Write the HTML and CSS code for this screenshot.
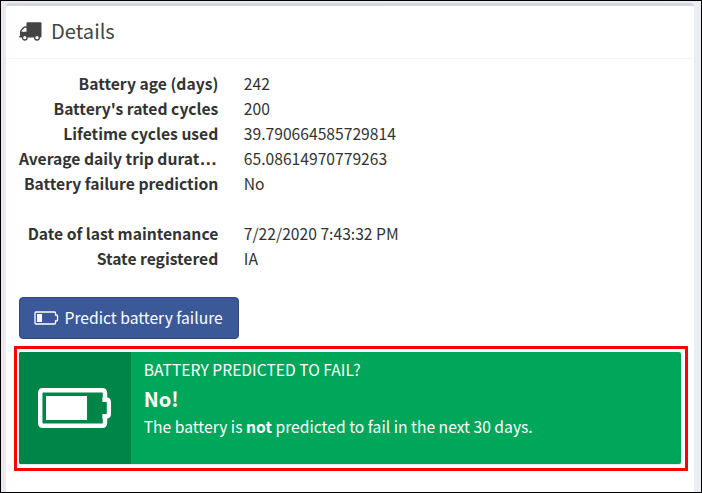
FILE: index.html
```html
<!DOCTYPE html>
<html lang="en">
<head>
<meta charset="utf-8">
<title>Details</title>
<link rel="stylesheet" href="styles.css">
</head>
<body>
<main class="page">
  <section class="box">
    <header class="box-header">
      <svg class="truck" width="23" height="20" viewBox="0 0 23 20">
        <path fill="#444" fill-rule="evenodd" d="M8.500 1.300H21.500q1 0 1 1V15.500q0 1-1 1H1q-1 0-1-.7t1-.7V10.500q0-.9.700-1.600L4.300 6Q5 5.300 6 5.300h1.500V2.300q0-1 1-1zM5.600 6.800 2.500 10v.7h5V6.800z"/>
        <circle cx="5.800" cy="16.700" r="2.300" fill="#fff" stroke="#444" stroke-width="1.300"/>
        <circle cx="18" cy="16.700" r="2.300" fill="#fff" stroke="#444" stroke-width="1.300"/>
      </svg>
      <h3 class="box-title">Details</h3>
    </header>
    <div class="box-body">
      <dl class="details">
        <dt>Battery age (days)</dt><dd>242</dd>
        <dt>Battery's rated cycles</dt><dd>200</dd>
        <dt>Lifetime cycles used</dt><dd>39.790664585729814</dd>
        <dt>Average daily trip durat<span class="ellipsis">…</span></dt><dd>65.08614970779263</dd>
        <dt>Battery failure prediction</dt><dd>No</dd>
        <dt class="second">Date of last maintenance</dt><dd class="second">7/22/2020 7:43:32 PM</dd>
        <dt>State registered</dt><dd>IA</dd>
      </dl>
      <button class="predict" type="button">
        <svg width="25" height="14" viewBox="0 0 25 14">
          <path fill="none" stroke="#fff" stroke-width="1.300" d="M2 1h18.500q1 0 1 1v2h1q1 0 1 1v4q0 1-1 1h-1v2q0 1-1 1H2q-1 0-1-1V2q0-1 1-1z"/>
          <path fill="#fff" d="M3 3h5v8H3z"/>
        </svg>
        <span>Predict battery failure</span>
      </button>
      <div class="highlight">
        <div class="info-box">
          <div class="info-icon">
            <svg width="74" height="42" viewBox="0 0 74 42">
              <path fill="none" stroke="#fff" stroke-width="4.500" d="M5 3.200h59q3 0 3 3v6.300h1q2.800 0 2.800 3v11q0 3-2.800 3h-1v6.300q0 3-3 3H5q-2.800 0-2.800-3V6.200q0-3 2.800-3z"/>
              <path fill="#fff" d="M64.500 10.500H69V15h-4.500zM64.500 27H69v4.500h-4.500z"/>
              <path fill="#008548" d="M64.500 15H68.500v12h-4z"/>
              <path fill="#fff" d="M8 9h41v24H8z"/>
            </svg>
          </div>
          <div class="info-content">
            <div class="info-text">BATTERY PREDICTED TO FAIL?</div>
            <div class="info-number">No!</div>
            <div class="info-note">The battery is <b>not</b> predicted to fail in the next 30 days.</div>
          </div>
        </div>
      </div>
    </div>
  </section>
</main>
</body>
</html>
```
FILE: styles.css
```css
* { box-sizing: border-box; }
body {
  margin: 0;
  font-family: "Noto Sans CJK SC", sans-serif;
  font-size: 15.67px;
  color: #333;
}
.page {
  height: 493px;
  padding: 2px 7px 0 5px;
  border: 1px solid #000;
  background: linear-gradient(90deg, #ebe8f0, #e9eef3);
  overflow: hidden;
}
.box {
  height: 489px;
  border-top: 3px solid #d2d6de;
  border-radius: 4px 4px 0 0;
  background: #fff;
}
.box-header {
  display: flex;
  height: 53px;
  padding: 14px 13px 0;
  border-bottom: 1px solid #f4f4f4;
  color: #444;
}
.truck { margin-top: 1px; }
.box-title {
  margin: 0 0 0 9px;
  font-size: 20.1px;
  font-weight: 400;
  line-height: 22px;
}
.box-body { padding: 12px 8px 0; }
.details {
  display: grid;
  grid-template-columns: 204.300px 1fr;
  column-gap: 25.500px;
  margin: 0;
  line-height: 25px;
  white-space: nowrap;
}
dt { font-weight: 700; text-align: right; }
dd { margin: 0; }
.second { margin-top: 25px; }
.ellipsis {
  margin-right: 1px;
  font-family: "Liberation Sans", sans-serif;
  font-size: 18px;
  line-height: 1;
}
.predict {
  display: flex;
  align-items: center;
  gap: 5.500px;
  width: 220px;
  height: 42px;
  margin: 26px 0 0 5px;
  padding: 0 14px;
  border: 1px solid #30487b;
  border-radius: 4px;
  background: #3b5998;
  color: #fff;
  font: inherit;
  white-space: nowrap;
}
.predict svg { flex: none; }
.predict span { margin-top: -2px; }
.highlight {
  width: 674px;
  height: 125px;
  margin-top: 7px;
  padding: 3px;
  border: 3px solid #f00;
}
.info-box {
  display: flex;
  width: 662px;
  height: 112px;
  margin-left: -1px;
  border-radius: 2px;
  background: #00a65a;
  box-shadow: 0 1px 1px rgba(0, 0, 0, .1);
  color: #fff;
  overflow: hidden;
}
.info-icon {
  width: 112px;
  padding: 35px 0 0 19px;
  background: #008548;
}
.info-content { padding: 5px 12.700px; white-space: nowrap; }
.info-text { line-height: 25px; }
.info-number { padding-top: 1px; font-size: 20px; font-weight: 700; line-height: 31px; }
.info-note { line-height: 25px; }
```
